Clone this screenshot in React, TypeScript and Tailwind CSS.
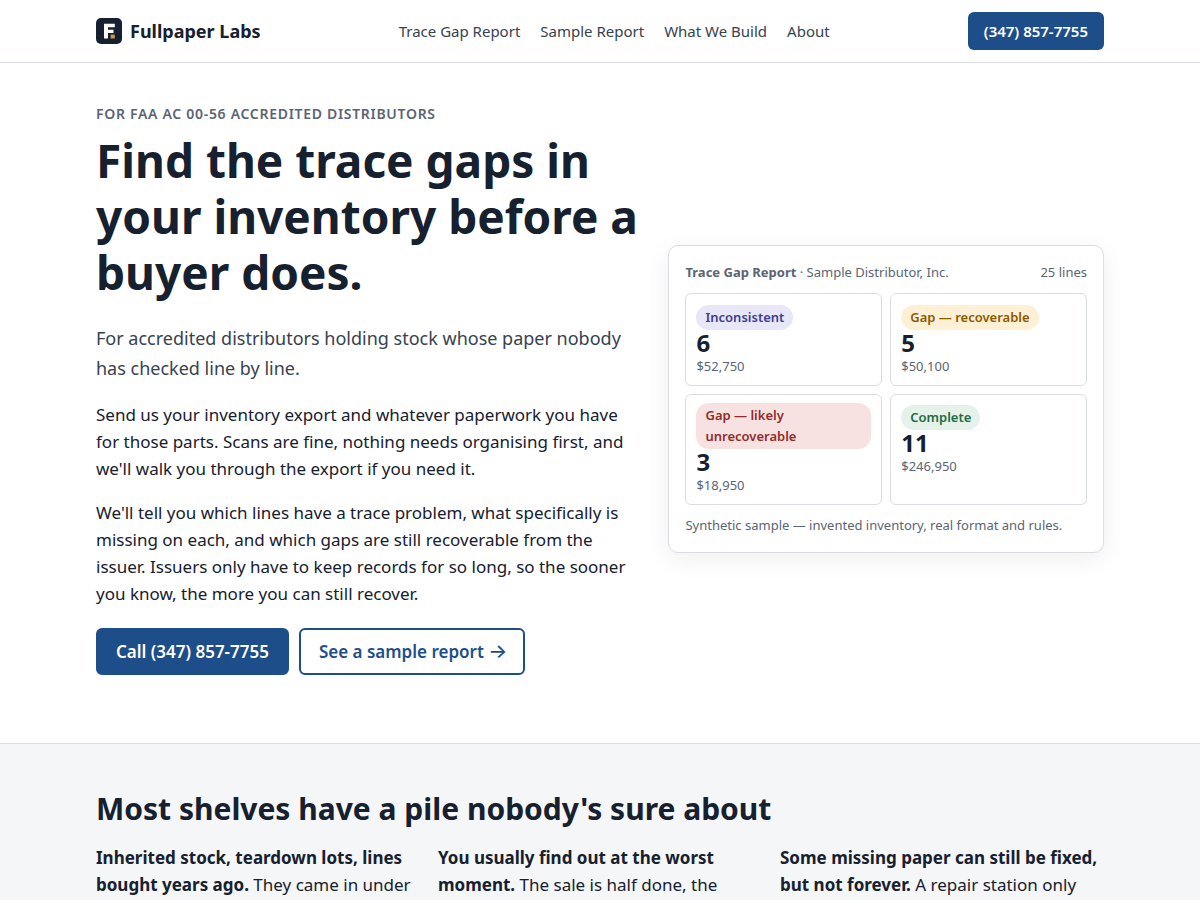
import clsx from 'clsx';

const navLinks = [
  { name: 'Trace Gap Report', href: '#trace-gap-report' },
  { name: 'Sample Report', href: '#sample-report' },
  { name: 'What We Build', href: '#what-we-build' },
  { name: 'About', href: '#about' },
];

const buckets = [
  { label: 'Inconsistent', count: 6, value: '$52,750', tone: 'bg-[#e7e7f8] text-[#3f3d8f]' },
  { label: 'Gap — recoverable', count: 5, value: '$50,100', tone: 'bg-[#fdf0d5] text-[#8a5a00]' },
  { label: 'Gap — likely unrecoverable', count: 3, value: '$18,950', tone: 'bg-[#f8e1e1] text-[#8f2d2d]' },
  { label: 'Complete', count: 11, value: '$246,950', tone: 'bg-[#e4f2ea] text-[#1f6b43]' },
];

const reasons = [
  {
    lead: 'Inherited stock, teardown lots, lines bought years ago.',
    text: 'They came in under',
  },
  {
    lead: 'You usually find out at the worst moment.',
    text: 'The sale is half done, the',
  },
  {
    lead: 'Some missing paper can still be fixed, but not forever.',
    text: 'A repair station only',
  },
];

const Logo = () => (
  <svg width="26" height="26" viewBox="0 0 26 26" aria-hidden="true">
    <rect width="26" height="26" rx="5" fill="#16202e" />
    <path d="M8 5.7h10.8v3.5H12v2.6h5.5v3.2H12v5.5H8z" fill="#fff" />
    <rect x="14.6" y="16.6" width="4.2" height="3.9" fill="#d19a3c" />
  </svg>
);

const Navbar = () => (
  <header className="border-b border-[#d9dde3] bg-white">
    <div className="mx-auto flex max-w-[1056px] items-center justify-between gap-4 px-6 py-3">
      <a href="#" className="flex items-center gap-2 text-lg leading-[27px] font-bold">
        <Logo />
        Fullpaper Labs
      </a>
      <nav className="flex items-center gap-5 text-[15px] text-[#37424f]">
        {navLinks.map((link) => (
          <a key={link.name} href={link.href}>
            {link.name}
          </a>
        ))}
      </nav>
      <a
        href="tel:+13478577755"
        className="rounded-md bg-[#1d4e89] px-4 py-[7px] text-[15px] leading-6 font-semibold text-white"
      >
        (347) 857-7755
      </a>
    </div>
  </header>
);

const ReportCard = () => (
  <div className="rounded-[10px] border border-[#d9dde3] bg-white p-4 text-[13px] leading-[21px] text-[#5a6573] shadow-[0_6px_24px_rgba(22,32,46,0.07)]">
    <div className="flex justify-between">
      <span>
        <strong>Trace Gap Report</strong> · Sample Distributor, Inc.
      </span>
      <span>25 lines</span>
    </div>
    <div className="mt-2.5 grid grid-cols-2 gap-2">
      {buckets.map((bucket) => (
        <div key={bucket.label} className="rounded-md border border-[#d9dde3] px-2.5 py-2">
          <div className="leading-[27px]">
            <span className={clsx('inline-block rounded-[13px] px-[9px] py-0.5 align-middle leading-[21px] font-semibold', bucket.tone)}>
              {bucket.label}
            </span>
          </div>
          <div className="text-2xl leading-[26px] font-bold text-[#16202e]">{bucket.count}</div>
          <div>{bucket.value}</div>
        </div>
      ))}
    </div>
    <p className="mt-2.5">Synthetic sample — invented inventory, real format and rules.</p>
  </div>
);

const Hero = () => (
  <section className="mx-auto grid max-w-[1056px] grid-cols-[1.25fr_1fr] items-center gap-7 px-6 pt-10 pb-12">
    <div>
      <p className="text-sm leading-[22px] font-semibold tracking-wider text-[#5a6573] uppercase">
        For FAA AC 00-56 accredited distributors
      </p>
      <h1 className="mt-[7px] text-[46px] leading-[56px] font-bold">
        Find the trace gaps in your inventory before a buyer does.
      </h1>
      <p className="mt-[23px] text-lg leading-[30px] text-[#37424f]">
        For accredited distributors holding stock whose paper nobody has checked line by line.
      </p>
      <p className="mt-[18px]">
        Send us your inventory export and whatever paperwork you have for those parts. Scans are fine, nothing needs
        organising first, and we'll walk you through the export if you need it.
      </p>
      <p className="mt-[17px]">
        We'll tell you which lines have a trace problem, what specifically is missing on each, and which gaps are still
        recoverable from the issuer. Issuers only have to keep records for so long, so the sooner you know, the more you
        can still recover.
      </p>
      <div className="mt-[21px] mb-5 flex flex-wrap gap-2.5 font-semibold">
        <a href="tel:+13478577755" className="rounded-md border-2 border-[#1d4e89] bg-[#1d4e89] px-[18px] py-2 text-white">
          Call (347) 857-7755
        </a>
        <a
          href="#sample-report"
          className="rounded-md border-2 border-[#1d4e89] bg-white py-2 pr-4 pl-[18px] text-[#1d4e89]"
        >
          See a sample report <span className="font-['Inter',sans-serif] text-xl leading-none font-medium">→</span>
        </a>
      </div>
    </div>
    <ReportCard />
  </section>
);

const Reasons = () => (
  <section className="border-t border-[#d9dde3] bg-[#f4f6f8]">
    <div className="mx-auto max-w-[1056px] px-6 pt-[47px] pb-12">
      <h2 className="text-3xl leading-9 font-bold">Most shelves have a pile nobody's sure about</h2>
      <div className="mt-[17px] grid grid-cols-3 gap-[18px]">
        {reasons.map((reason) => (
          <p key={reason.lead}>
            <strong>{reason.lead}</strong> {reason.text}
          </p>
        ))}
      </div>
    </div>
  </section>
);

export default function App() {
  return (
    <div className="bg-white font-['Noto_Sans',sans-serif] text-[17px] leading-[27px] text-[#16202e]">
      <Navbar />
      <main>
        <Hero />
        <Reasons />
      </main>
    </div>
  );
}
